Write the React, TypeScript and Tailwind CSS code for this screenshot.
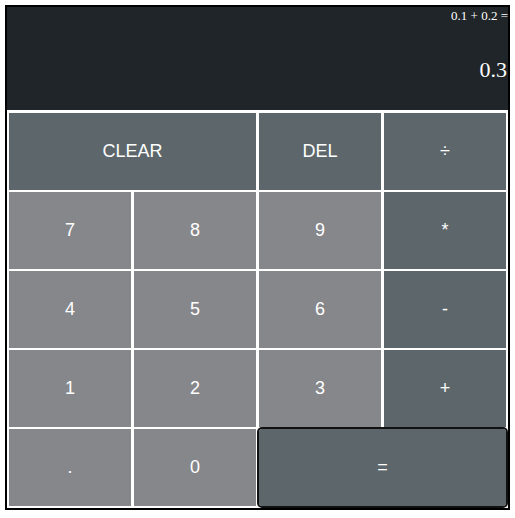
const rows: { label: string; span?: boolean; dark?: boolean }[][] = [
  [{ label: 'CLEAR', span: true, dark: true }, { label: 'DEL', dark: true }, { label: '÷', dark: true }],
  [{ label: '7' }, { label: '8' }, { label: '9' }, { label: '*', dark: true }],
  [{ label: '4' }, { label: '5' }, { label: '6' }, { label: '-', dark: true }],
  [{ label: '1' }, { label: '2' }, { label: '3' }, { label: '+', dark: true }],
  [{ label: '.' }, { label: '0' }],
];

const App = () => {
  return (
    <div className="p-[5px] bg-white" style={{ fontFamily: '"Liberation Sans", Arial, sans-serif' }}>
      <div className="w-[505px] border-2 border-black bg-white">
        <div
          className="h-[103px] bg-[#1f2528] text-white flex flex-col items-end"
          style={{ fontFamily: '"Liberation Serif", "Times New Roman", serif' }}
        >
          <div className="text-[13px] leading-[15px] mt-[1px]">0.1 + 0.2 =</div>
          <div className="text-[22px] leading-[25px] mt-[34px] mr-[1px]">0.3</div>
        </div>
        <div className="grid grid-cols-4 auto-rows-[77px] gap-x-[3px] gap-y-[2px] px-[2px] pt-[3px] pb-[2px]">
          {rows.flat().map((b, i) => (
            <button
              key={i}
              className={`${b.span ? 'col-span-2' : ''} ${
                b.dark ? 'bg-[#5d676b]' : 'bg-[#86878b]'
              } text-white text-[18px] flex items-center justify-center`}
            >
              {b.label}
            </button>
          ))}
          <button className="col-span-2 bg-[#5d676b] text-white text-[18px] flex items-center justify-center rounded-[3px] outline-2 outline-[#111] relative z-10">
            =
          </button>
        </div>
      </div>
    </div>
  );
};

export default App;
